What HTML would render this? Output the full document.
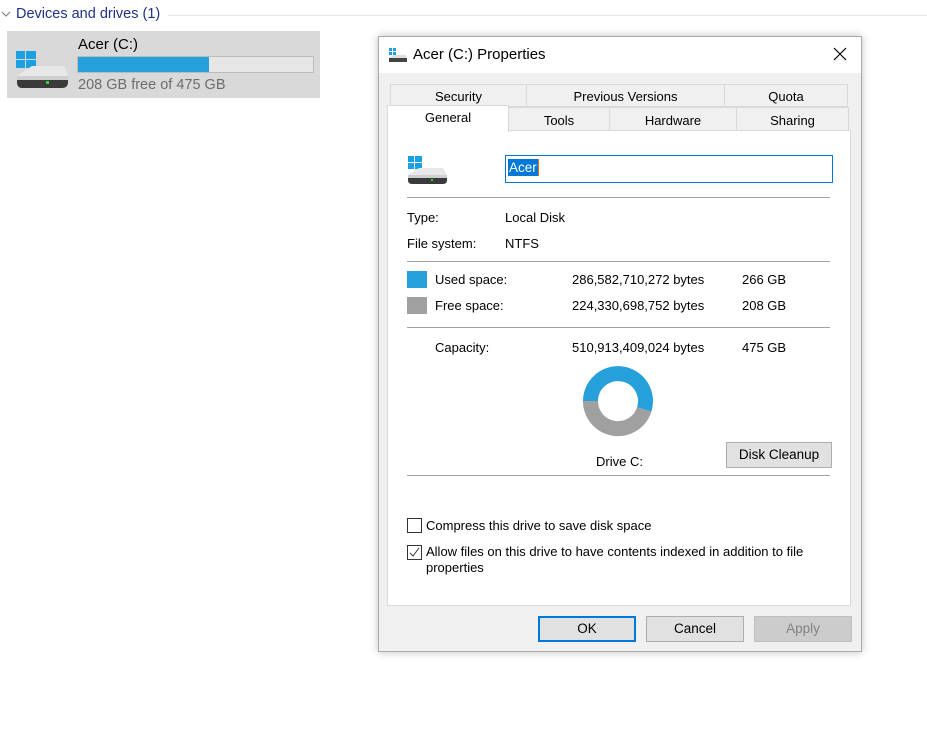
<!DOCTYPE html>
<html><head><meta charset="utf-8"><style>
*{margin:0;padding:0;box-sizing:border-box}
body{width:927px;height:741px;background:#fff;font-family:"Liberation Sans",sans-serif;font-size:13px;color:#000;position:relative;overflow:hidden}
.a{position:absolute;white-space:nowrap}
.tab{position:absolute;background:#f0f0f0;border:1px solid #d9d9d9;text-align:center;line-height:24px;font-size:13px}
.btn{position:absolute;height:26px;border:1px solid #adadad;background:#e1e1e1;text-align:center;line-height:24px;font-size:13.5px}
.hr{position:absolute;left:407px;width:423px;height:1px;background:#a0a0a0}
.cb{position:absolute;width:15px;height:15px;border:1px solid #333;background:#fff}
</style></head><body>
<svg class="a" style="left:1px;top:11px" width="10" height="6"><path d="M1 1 L5 5 L9 1" fill="none" stroke="#777" stroke-width="1"/></svg>
<div class="a" style="left:16px;top:6px;font-size:14.5px;color:#1e3287">Devices and drives (1)</div>
<div class="a" style="left:168px;top:15px;width:759px;height:1px;background:#e5e5e5"></div>
<div class="a" style="left:7px;top:31px;width:313px;height:67px;background:#d9d9d9"></div>
<svg class="a" style="left:14px;top:50px" width="56" height="42">
<rect x="2" y="1" width="9" height="8" fill="#1ba1e2"/><rect x="12" y="1" width="10" height="8" fill="#1ba1e2"/>
<rect x="2" y="10" width="9" height="8" fill="#1ba1e2"/><rect x="12" y="10" width="10" height="8" fill="#1ba1e2"/>
<path d="M3 26 L18 16 L50 16 L54 26 Z" fill="#e8e8e8"/><path d="M3 26 L54 26 L54 32 Q54 38 48 38 L8 38 Q3 38 3 32 Z" fill="#3a3a3a"/>
<rect x="3" y="26" width="51" height="4" fill="#cfcfcf"/><rect x="32" y="31" width="3" height="3" fill="#3c3"/></svg>
<div class="a" style="left:78px;top:36px;font-size:15px">Acer (C:)</div>
<div class="a" style="left:77px;top:56px;width:237px;height:17px;background:#e6e6e6;border:1px solid #bcbcbc"></div>
<div class="a" style="left:78px;top:57px;width:131px;height:15px;background:#26a0da"></div>
<div class="a" style="left:78px;top:77px;font-size:14.5px;color:#6d6d6d">208 GB free of 475 GB</div>

<div class="a" style="left:378px;top:36px;width:484px;height:616px;background:#f0f0f0;border:1px solid #aaa;box-shadow:0 0 8px rgba(0,0,0,.25)"></div>
<div class="a" style="left:379px;top:37px;width:482px;height:36px;background:#fff"></div>
<svg class="a" style="left:388px;top:47px" width="20" height="16"><rect x="1" y="1" width="3" height="3" fill="#1ba1e2"/><rect x="5" y="1" width="3" height="3" fill="#1ba1e2"/><rect x="1" y="5" width="3" height="3" fill="#1ba1e2"/><rect x="5" y="5" width="3" height="3" fill="#1ba1e2"/><path d="M1 11 L6 8 L18 8 L19 11 Z" fill="#ddd"/><rect x="1" y="11" width="18" height="4" fill="#444"/></svg>
<div class="a" style="left:413px;top:46px;font-size:15px">Acer (C:) Properties</div>
<svg class="a" style="left:833px;top:47px" width="14" height="14"><path d="M1 1L13 13M13 1L1 13" stroke="#000" stroke-width="1.2"/></svg>

<div class="tab" style="left:390px;top:84px;width:137px;height:23px">Security</div>
<div class="tab" style="left:526px;top:84px;width:199px;height:23px">Previous Versions</div>
<div class="tab" style="left:724px;top:84px;width:124px;height:23px">Quota</div>
<div class="tab" style="left:508px;top:107px;width:102px;height:24px;line-height:26px">Tools</div>
<div class="tab" style="left:609px;top:107px;width:128px;height:24px;line-height:26px">Hardware</div>
<div class="tab" style="left:736px;top:107px;width:113px;height:24px;line-height:26px">Sharing</div>
<div class="a" style="left:387px;top:130px;width:464px;height:476px;background:#fff;border:1px solid #d9d9d9"></div>
<div class="a" style="left:387px;top:105px;width:122px;height:27px;background:#fff;border:1px solid #d9d9d9;border-bottom:none;text-align:center;line-height:24px">General</div>

<svg class="a" style="left:406px;top:155px" width="44" height="32">
<rect x="2" y="1" width="6" height="6" fill="#1ba1e2"/><rect x="9" y="1" width="7" height="6" fill="#1ba1e2"/><rect x="2" y="8" width="6" height="6" fill="#1ba1e2"/><rect x="9" y="8" width="7" height="6" fill="#1ba1e2"/>
<path d="M2 20 L13 13 L37 13 L41 20 Z" fill="#e8e8e8"/><path d="M2 20 L41 20 L41 25 Q41 29 37 29 L6 29 Q2 29 2 25 Z" fill="#3a3a3a"/><rect x="2" y="20" width="39" height="3" fill="#cfcfcf"/><rect x="25" y="24" width="2" height="2" fill="#3c3"/></svg>
<div class="a" style="left:505px;top:155px;width:328px;height:28px;border:1px solid #0078d7;background:#fff"></div>
<div class="a" style="left:508px;top:159px;height:17px;padding:0 1px;background:#0078d7;color:#fff;font-size:13.5px;line-height:17px;border-right:1px solid #f60">Acer</div>
<div class="hr" style="top:197px"></div>
<div class="a" style="left:407px;top:210px">Type:</div><div class="a" style="left:505px;top:210px">Local Disk</div>
<div class="a" style="left:407px;top:236px">File system:</div><div class="a" style="left:505px;top:236px">NTFS</div>
<div class="hr" style="top:261px"></div>
<div class="a" style="left:407px;top:271px;width:20px;height:17px;background:#26a0da"></div>
<div class="a" style="left:435px;top:272px">Used space:</div><div class="a" style="left:572px;top:272px">286,582,710,272 bytes</div><div class="a" style="left:742px;top:272px">266 GB</div>
<div class="a" style="left:407px;top:297px;width:20px;height:17px;background:#a0a0a0"></div>
<div class="a" style="left:435px;top:298px">Free space:</div><div class="a" style="left:572px;top:298px">224,330,698,752 bytes</div><div class="a" style="left:742px;top:298px">208 GB</div>
<div class="hr" style="top:327px"></div>
<div class="a" style="left:435px;top:340px">Capacity:</div><div class="a" style="left:572px;top:340px">510,913,409,024 bytes</div><div class="a" style="left:742px;top:340px">475 GB</div>
<svg class="a" style="left:578px;top:361px" width="80" height="80">
<path d="M12.5 40 A27.5 27.5 0 1 1 66.2 48.5" fill="none" stroke="#26a0da" stroke-width="15"/>
<path d="M66.2 48.5 A27.5 27.5 0 0 1 12.5 40" fill="none" stroke="#a0a0a0" stroke-width="15"/></svg>
<div class="a" style="left:596px;top:454px">Drive C:</div>
<div class="btn" style="left:726px;top:442px;width:106px">Disk Cleanup</div>
<div class="hr" style="top:475px"></div>
<div class="cb" style="left:407px;top:518px"></div>
<div class="a" style="left:426px;top:518px">Compress this drive to save disk space</div>
<div class="cb" style="left:407px;top:545px"><svg width="13" height="13" style="position:absolute;left:0;top:0"><path d="M2 7 L5 10 L11 2" fill="none" stroke="#333" stroke-width="1"/></svg></div>
<div class="a" style="left:426px;top:544px;line-height:16px">Allow files on this drive to have contents indexed in addition to file<br>properties</div>
<div class="btn" style="left:538px;top:616px;width:98px;border:2px solid #0078d7;line-height:22px">OK</div>
<div class="btn" style="left:646px;top:616px;width:98px">Cancel</div>
<div class="btn" style="left:754px;top:616px;width:98px;background:#ccc;border-color:#bfbfbf;color:#838383">Apply</div>
</body></html>
